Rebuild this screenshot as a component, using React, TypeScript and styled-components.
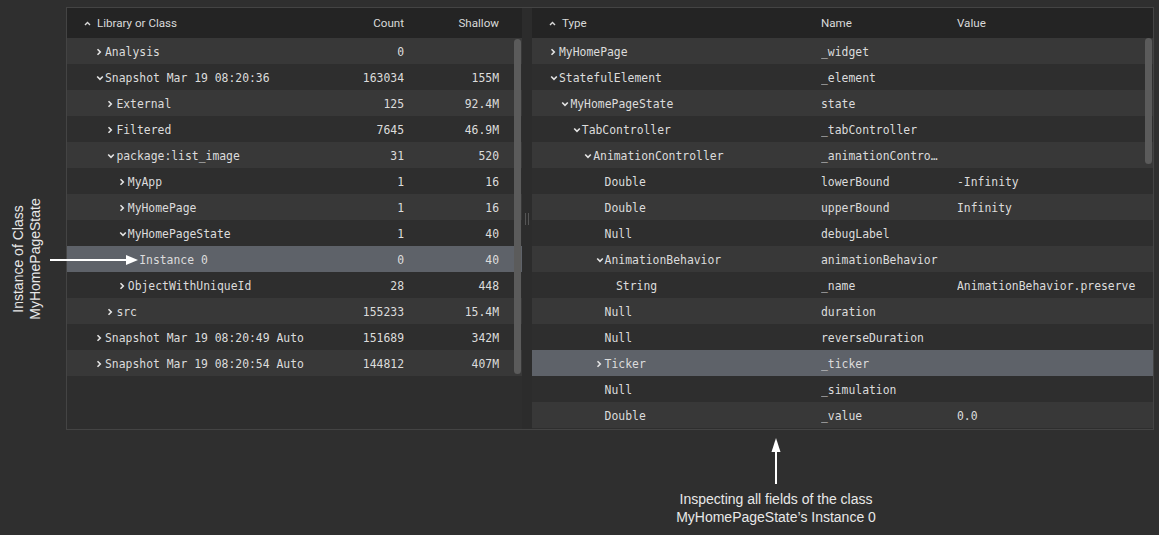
import React from "react";
import styled, { createGlobalStyle } from "styled-components";

const GlobalStyle = createGlobalStyle`
  html, body { margin: 0; padding: 0; background: #2f2f2f; }
  #root { width: 1159px; height: 535px; }
`;

const MONO = `"DejaVu Sans Mono", "Liberation Mono", monospace`;
const SANS = `Roboto, "Noto Sans", "Liberation Sans", sans-serif`;
const INDENT = 11.4;

const Page = styled.div`
  position: relative;
  width: 1159px;
  height: 535px;
  box-sizing: border-box;
  padding: 7px 0 0 66px;
  background: #2f2f2f;
  overflow: hidden;
`;

const Frame = styled.div`
  display: flex;
  width: 1088px;
  height: 423px;
  box-sizing: border-box;
  border: 1px solid #444444;
  background: #2e2e2e;
`;

const Pane = styled.div<{ $width?: number }>`
  position: relative;
  display: flex;
  flex-direction: column;
  ${(p) => (p.$width ? `width: ${p.$width}px; flex: none;` : `flex: 1;`)}
  min-width: 0;
`;

const Divider = styled.div`
  flex: none;
  width: 10px;
  display: flex;
  align-items: center;
  justify-content: center;
  gap: 2px;
  background: #2c2c2c;
`;

const Grip = styled.span`
  width: 1px;
  height: 12px;
  background: #555555;
`;

const HeaderRow = styled.div<{ $cols: string }>`
  display: grid;
  grid-template-columns: ${(p) => p.$cols};
  height: 30px;
  flex: none;
  align-items: center;
  background: #242424;
  font-family: ${SANS};
  font-size: 11.6px;
  color: #dadada;
`;

const HeaderCell = styled.div<{ $align?: string; $pad?: number }>`
  display: flex;
  align-items: center;
  justify-content: ${(p) => (p.$align === "right" ? "flex-end" : "flex-start")};
  padding-left: ${(p) => p.$pad ?? 0}px;
  white-space: nowrap;
`;

const SortCaret = styled.svg`
  width: 7px;
  height: 5px;
  margin-right: 6px;
  flex: none;
`;

const Row = styled.div<{ $cols: string; $odd: boolean; $selected?: boolean }>`
  display: grid;
  grid-template-columns: ${(p) => p.$cols};
  height: 26px;
  box-sizing: border-box;
  padding-top: 1px;
  flex: none;
  align-items: center;
  background: ${(p) => (p.$selected ? "#5e6269" : p.$odd ? "#2e2e2e" : "#383838")};
  font-family: ${MONO};
  font-size: 11.4px;
  color: #dcdcdc;
  white-space: nowrap;
`;

const NameCell = styled.div<{ $pad: number }>`
  display: flex;
  align-items: center;
  padding-left: ${(p) => p.$pad}px;
  overflow: hidden;
`;

const ChevSlot = styled.span`
  width: 9px;
  flex: none;
  display: flex;
  align-items: center;
`;

const NumCell = styled.div`
  text-align: right;
`;

const TextCell = styled.div`
  overflow: hidden;
`;

const Scrollbar = styled.div<{ $top: number; $height: number }>`
  position: absolute;
  right: 1px;
  top: ${(p) => p.$top}px;
  width: 7px;
  height: ${(p) => p.$height}px;
  border-radius: 3.5px;
  background: #5b5b5b;
`;

const SideNote = styled.div`
  position: absolute;
  left: 27px;
  top: 259px;
  transform: translate(-50%, -50%) rotate(-90deg);
  font-family: "Liberation Sans", Arial, sans-serif;
  font-size: 14px;
  line-height: 17px;
  color: #e8e8e8;
  text-align: center;
  white-space: nowrap;
`;

const SideArrow = styled.svg`
  position: absolute;
  left: 50px;
  top: 254px;
`;

const BottomNote = styled.div`
  position: absolute;
  left: 576px;
  top: 438px;
  width: 400px;
  display: flex;
  flex-direction: column;
  align-items: center;
  font-family: "Liberation Sans", Arial, sans-serif;
  font-size: 14px;
  line-height: 17.5px;
  color: #e8e8e8;
  text-align: center;
`;

const UpArrow = styled.svg`
  display: block;
  margin-bottom: 7px;
`;

const Chevron: React.FC<{ dir: "right" | "down" }> = ({ dir }) =>
  dir === "right" ? (
    <svg width="6" height="8" viewBox="0 0 6 8">
      <path d="M1.5 1.2 L4.3 4 L1.5 6.8" fill="none" stroke="#e4e4e4" strokeWidth="1.6" />
    </svg>
  ) : (
    <svg width="8" height="6" viewBox="0 0 8 6">
      <path d="M1.2 1.5 L4 4.3 L6.8 1.5" fill="none" stroke="#e4e4e4" strokeWidth="1.6" />
    </svg>
  );

const Caret = () => (
  <SortCaret viewBox="0 0 7 5">
    <path d="M1 4 L3.5 1.5 L6 4" fill="none" stroke="#dadada" strokeWidth="1.4" />
  </SortCaret>
);

type Chev = "right" | "down" | null;

interface LRow { name: string; level: number; chev: Chev; count: string; shallow: string; selected?: boolean }
interface RRow { type: string; level: number; chev: Chev; name: string; value?: string; selected?: boolean }

const leftRows: LRow[] = [
  { name: "Analysis", level: 0, chev: "right", count: "0", shallow: "" },
  { name: "Snapshot Mar 19 08:20:36", level: 0, chev: "down", count: "163034", shallow: "155M" },
  { name: "External", level: 1, chev: "right", count: "125", shallow: "92.4M" },
  { name: "Filtered", level: 1, chev: "right", count: "7645", shallow: "46.9M" },
  { name: "package:list_image", level: 1, chev: "down", count: "31", shallow: "520" },
  { name: "MyApp", level: 2, chev: "right", count: "1", shallow: "16" },
  { name: "MyHomePage", level: 2, chev: "right", count: "1", shallow: "16" },
  { name: "MyHomePageState", level: 2, chev: "down", count: "1", shallow: "40" },
  { name: "Instance 0", level: 3, chev: null, count: "0", shallow: "40", selected: true },
  { name: "ObjectWithUniqueId", level: 2, chev: "right", count: "28", shallow: "448" },
  { name: "src", level: 1, chev: "right", count: "155233", shallow: "15.4M" },
  { name: "Snapshot Mar 19 08:20:49 Auto", level: 0, chev: "right", count: "151689", shallow: "342M" },
  { name: "Snapshot Mar 19 08:20:54 Auto", level: 0, chev: "right", count: "144812", shallow: "407M" },
];

const rightRows: RRow[] = [
  { type: "MyHomePage", level: 0, chev: "right", name: "_widget" },
  { type: "StatefulElement", level: 0, chev: "down", name: "_element" },
  { type: "MyHomePageState", level: 1, chev: "down", name: "state" },
  { type: "TabController", level: 2, chev: "down", name: "_tabController" },
  { type: "AnimationController", level: 3, chev: "down", name: "_animationContro\u2026" },
  { type: "Double", level: 4, chev: null, name: "lowerBound", value: "-Infinity" },
  { type: "Double", level: 4, chev: null, name: "upperBound", value: "Infinity" },
  { type: "Null", level: 4, chev: null, name: "debugLabel" },
  { type: "AnimationBehavior", level: 4, chev: "down", name: "animationBehavior" },
  { type: "String", level: 5, chev: null, name: "_name", value: "AnimationBehavior.preserve" },
  { type: "Null", level: 4, chev: null, name: "duration" },
  { type: "Null", level: 4, chev: null, name: "reverseDuration" },
  { type: "Ticker", level: 4, chev: "right", name: "_ticker", selected: true },
  { type: "Null", level: 4, chev: null, name: "_simulation" },
  { type: "Double", level: 4, chev: null, name: "_value", value: "0.0" },
];

const LEFT_COLS = "242px 95px 95px";
const RIGHT_COLS = "289px 136px 1fr";

export default function App() {
  return (
    <>
      <GlobalStyle />
      <Page>
        <Frame>
          <Pane $width={455}>
            <HeaderRow $cols={LEFT_COLS}>
              <HeaderCell $pad={17}>
                <Caret />
                Library or Class
              </HeaderCell>
              <HeaderCell $align="right">Count</HeaderCell>
              <HeaderCell $align="right">Shallow</HeaderCell>
            </HeaderRow>
            {leftRows.map((r, i) => (
              <Row key={i} $cols={LEFT_COLS} $odd={i % 2 === 1} $selected={r.selected}>
                <NameCell $pad={29 + r.level * INDENT}>
                  <ChevSlot>{r.chev && <Chevron dir={r.chev} />}</ChevSlot>
                  {r.name}
                </NameCell>
                <NumCell>{r.count}</NumCell>
                <NumCell>{r.shallow}</NumCell>
              </Row>
            ))}
            <Scrollbar $top={31} $height={335} />
          </Pane>
          <Divider>
            <Grip />
            <Grip />
          </Divider>
          <Pane>
            <HeaderRow $cols={RIGHT_COLS}>
              <HeaderCell $pad={17}>
                <Caret />
                Type
              </HeaderCell>
              <HeaderCell>Name</HeaderCell>
              <HeaderCell>Value</HeaderCell>
            </HeaderRow>
            {rightRows.map((r, i) => (
              <Row key={i} $cols={RIGHT_COLS} $odd={i % 2 === 1} $selected={r.selected}>
                <NameCell $pad={18 + r.level * INDENT}>
                  <ChevSlot>{r.chev && <Chevron dir={r.chev} />}</ChevSlot>
                  {r.type}
                </NameCell>
                <TextCell>{r.name}</TextCell>
                <TextCell>{r.value ?? ""}</TextCell>
              </Row>
            ))}
            <Scrollbar $top={30} $height={126} />
          </Pane>
        </Frame>

        <SideNote>
          Instance of Class
          <br />
          MyHomePageState
        </SideNote>
        <SideArrow width="90" height="12" viewBox="0 0 90 12">
          <line x1="0" y1="6" x2="78" y2="6" stroke="#ffffff" strokeWidth="2" />
          <polygon points="76,1 88,6 76,11" fill="#ffffff" />
        </SideArrow>

        <BottomNote>
          <UpArrow width="12" height="46" viewBox="0 0 12 46">
            <polygon points="6,0 10.5,14 1.5,14" fill="#ffffff" />
            <line x1="6" y1="12" x2="6" y2="46" stroke="#ffffff" strokeWidth="2" />
          </UpArrow>
          Inspecting all fields of the class
          <br />
          MyHomePageState’s Instance 0
        </BottomNote>
      </Page>
    </>
  );
}
